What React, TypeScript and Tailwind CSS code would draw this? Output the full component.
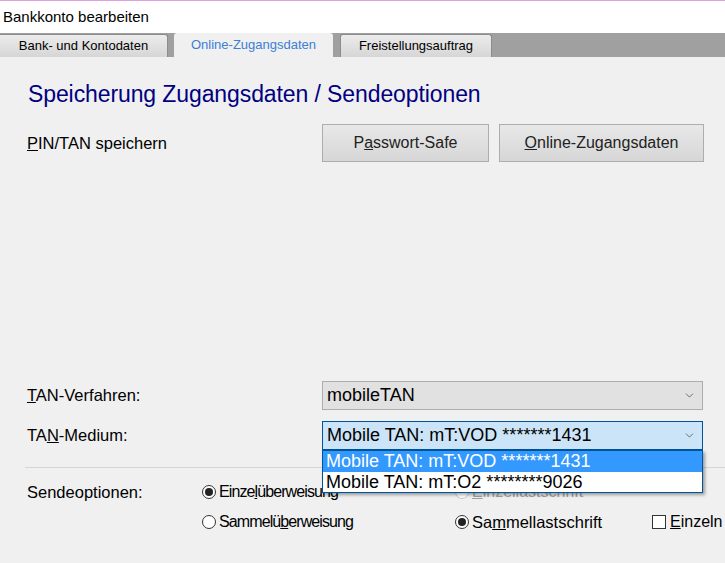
import { ChevronDown } from 'lucide-react';

function Radio({ checked, disabled }: { checked?: boolean; disabled?: boolean }) {
  return (
    <span
      className={`inline-flex w-[14px] h-[14px] rounded-full border items-center justify-center bg-white ${
        disabled ? 'border-[#c8c8c8]' : 'border-[#333]'
      }`}
    >
      {checked && <span className="w-[8px] h-[8px] rounded-full bg-[#222]" />}
    </span>
  );
}

function Select({ value, open }: { value: string; open?: boolean }) {
  return (
    <div
      className={`w-[381px] h-[29px] flex items-center justify-between pl-[4px] pr-[6px] border text-[18px] ${
        open ? 'bg-[#cce4f7] border-[#005499]' : 'bg-[#e1e1e1] border-[#adadad]'
      }`}
    >
      <span>{value}</span>
      <ChevronDown className="w-[13px] h-[13px] text-[#555]" strokeWidth={1.5} />
    </div>
  );
}

export default function App() {
  return (
    <div
      className="relative w-[725px] h-[563px] overflow-hidden bg-[#f0f0f0] text-black"
      style={{ fontFamily: '"Liberation Sans", Arial, sans-serif' }}
    >
      <div className="h-[1px] bg-[#dca0dc]" />
      {/* title bar */}
      <div className="h-[32px] bg-white flex items-center pl-[3px] text-[15px]">Bankkonto bearbeiten</div>

      {/* tab strip */}
      <div className="h-[24px] bg-[#a0a0a0] flex items-end text-[13px]">
        <div className="w-[168px] h-[23px] flex items-center justify-center rounded-tr-[3px] border-r border-t border-[#8c8c8c] bg-gradient-to-b from-[#ececec] to-[#d6d6d6]">
          Bank- und Kontodaten
        </div>
        <div className="ml-[6px] w-[159px] h-[24px] flex items-center justify-center rounded-t-[3px] bg-[#f0f0f0] text-[#3c7fd5]">
          Online-Zugangsdaten
        </div>
        <div className="ml-[7px] w-[152px] h-[23px] flex items-center justify-center rounded-t-[3px] border-t border-x border-[#8c8c8c] bg-gradient-to-b from-[#ececec] to-[#d6d6d6]">
          Freistellungsauftrag
        </div>
      </div>

      {/* content */}
      <div className="pl-[27px]">
        <div className="pt-[20px] h-[67px] text-[23px] tracking-[-0.1px] text-[#000080] pl-[1px]">Speicherung Zugangsdaten / Sendeoptionen</div>

        <div className="flex items-center h-[38px]">
          <div className="w-[295px] text-[16.5px]">
            <span className="underline">P</span>IN/TAN speichern
          </div>
          <button className="w-[167px] h-[38px] border border-[#adadad] bg-gradient-to-b from-[#e8e8e8] to-[#d6d6d6] text-[16px] text-[#222]">
            P<span className="underline">a</span>sswort-Safe
          </button>
          <button className="ml-[10px] w-[205px] h-[38px] border border-[#adadad] bg-gradient-to-b from-[#e8e8e8] to-[#d6d6d6] text-[16px] text-[#222]">
            <span className="underline">O</span>nline-Zugangsdaten
          </button>
        </div>

        <div className="mt-[219px] flex items-center h-[29px]">
          <div className="w-[295px] text-[16.5px]">
            <span className="underline">T</span>AN-Verfahren:
          </div>
          <Select value="mobileTAN" />
        </div>

        <div className="mt-[11px] flex items-center h-[29px]">
          <div className="w-[295px] text-[16.5px]">
            TA<span className="underline">N</span>-Medium:
          </div>
          <Select value="Mobile TAN: mT:VOD *******1431" open />
        </div>

        <div className="mt-[17px] ml-[-2px] h-[1px] bg-[#d5d5d5]" />

        <div className="mt-[14px] flex items-center h-[20px] text-[16px]">
          <div className="w-[175px] text-[16.5px]">Sendeoptionen:</div>
          <div className="w-[253px] flex items-center gap-[3px]">
            <Radio checked />
            <span className="tracking-[-0.9px]">
              Einze<span className="underline">l</span>überweisung
            </span>
          </div>
          <div className="flex items-center gap-[3px] text-[#a0a0a0]">
            <Radio disabled />
            <span>
              <span className="underline">E</span>inzellastschrift
            </span>
          </div>
        </div>

        <div className="mt-[10px] flex items-center h-[20px] text-[16px]">
          <div className="w-[175px]" />
          <div className="w-[253px] flex items-center gap-[3px]">
            <Radio />
            <span className="tracking-[-0.9px]">
              Sammelü<span className="underline">b</span>erweisung
            </span>
          </div>
          <div className="w-[197px] flex items-center gap-[3px]">
            <Radio checked />
            <span className="text-[16.5px]">
              Sa<span className="underline">m</span>mellastschrift
            </span>
          </div>
          <div className="flex items-center gap-[4px] whitespace-nowrap">
            <span className="w-[14px] h-[14px] border border-[#333] bg-white" />
            <span>
              <span className="underline">E</span>inzeln
            </span>
          </div>
        </div>
      </div>

      {/* open dropdown list */}
      <div className="absolute left-[322px] top-[450px] w-[381px] border border-[#005499] bg-white text-[18px] shadow-[2px_2px_3px_rgba(0,0,0,0.35)]">
        <div className="h-[21px] flex items-center pl-[3px] bg-[#3399ff] text-white">Mobile TAN: mT:VOD *******1431</div>
        <div className="h-[20px] flex items-center pl-[3px]">Mobile TAN: mT:O2 ********9026</div>
      </div>
    </div>
  );
}
